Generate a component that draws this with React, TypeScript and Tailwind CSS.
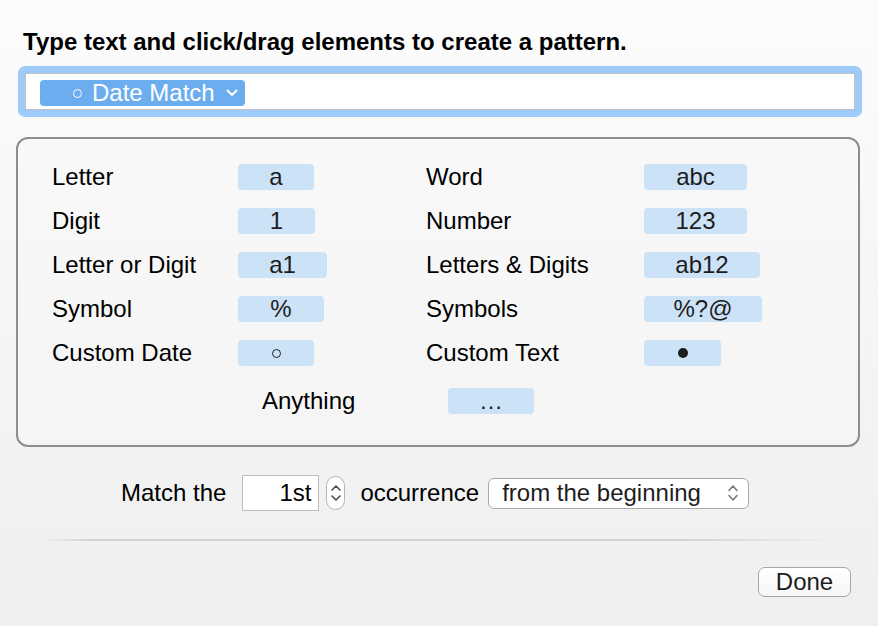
import React from "react";

type Element = {
  label: string;
  sample: React.ReactNode;
  width: string;
};

const leftColumn: Element[] = [
  { label: "Letter", sample: "a", width: "w-[76px]" },
  { label: "Digit", sample: "1", width: "w-[77px]" },
  { label: "Letter or Digit", sample: "a1", width: "w-[89px]" },
  { label: "Symbol", sample: "%", width: "w-[86px]" },
  {
    label: "Custom Date",
    sample: <span className="inline-block h-[9px] w-[9px] rounded-full border-[1.5px] border-[#222]" />,
    width: "w-[76px]",
  },
];

const rightColumn: Element[] = [
  { label: "Word", sample: "abc", width: "w-[103px]" },
  { label: "Number", sample: "123", width: "w-[103px]" },
  { label: "Letters & Digits", sample: "ab12", width: "w-[116px]" },
  { label: "Symbols", sample: "%?@", width: "w-[118px]" },
  {
    label: "Custom Text",
    sample: <span className="inline-block h-[10px] w-[10px] rounded-full bg-[#1d1d1d]" />,
    width: "w-[77px]",
  },
];

function Pill({ children, width }: { children: React.ReactNode; width: string }) {
  return (
    <div
      className={`${width} flex h-[26px] items-center justify-center rounded-[4px] bg-[#cce2f6] text-[#1d1d1d] leading-[26px]`}
    >
      {children}
    </div>
  );
}

function ChevronDown({ className }: { className?: string }) {
  return (
    <svg viewBox="0 0 12 8" className={className} fill="none">
      <path d="M1.5 1.5 6 6l4.5-4.5" stroke="currentColor" strokeWidth="2" strokeLinecap="round" strokeLinejoin="round" />
    </svg>
  );
}

function UpDown({ className }: { className?: string }) {
  return (
    <svg viewBox="0 0 12 20" className={className} fill="none">
      <path d="M2 7.5 6 3l4 4.5" stroke="currentColor" strokeWidth="1.6" strokeLinecap="round" strokeLinejoin="round" />
      <path d="M2 12.5 6 17l4-4.5" stroke="currentColor" strokeWidth="1.6" strokeLinecap="round" strokeLinejoin="round" />
    </svg>
  );
}

export default function App() {
  const rows = leftColumn.map((left, i) => ({ left, right: rightColumn[i] }));

  return (
    <div className="flex h-[626px] w-[878px] flex-col bg-gradient-to-b from-[#fcfcfc] to-[#efefef] font-['Liberation_Sans',Arial,sans-serif] text-[24px] text-black">
      <h1 className="pl-[23px] pt-[28px] text-[24px] font-bold leading-[28px]">
        Type text and click/drag elements to create a pattern.
      </h1>

      <div className="ml-[18px] mt-[10px] w-[844px] rounded-[7px] bg-[#9fcbf8] p-[7px]">
        <div className="h-[37px] border border-[#c2c2c2] bg-white pl-[14px] pt-[6px]">
          <div className="flex h-[26px] w-[205px] items-center rounded-[4px] bg-[#6cadef] pl-[33px] text-white leading-[26px]">
            <span className="mr-[10px] inline-block h-[9px] w-[9px] rounded-full border-[1.5px] border-white" />
            <span>Date Match</span>
            <ChevronDown className="ml-[11px] h-[8px] w-[12px] text-white" />
          </div>
        </div>
      </div>

      <section className="ml-[16px] mt-[20px] h-[310px] w-[844px] rounded-[12px] border-2 border-[#8d8d8d] bg-gradient-to-b from-[#f8f8f8] to-[#f5f5f5] pl-[34px] pt-[25px]">
        <div className="grid grid-cols-[186px_188px_218px_1fr] gap-y-[18px]">
          {rows.map(({ left, right }) => (
            <React.Fragment key={left.label}>
              <span className="leading-[26px]">{left.label}</span>
              <Pill width={left.width}>{left.sample}</Pill>
              <span className="leading-[26px]">{right.label}</span>
              <Pill width={right.width}>{right.sample}</Pill>
            </React.Fragment>
          ))}
        </div>
        <div className="mt-[22px] flex pl-[210px]">
          <span className="w-[186px] leading-[26px]">Anything</span>
          <Pill width="w-[86px]">…</Pill>
        </div>
      </section>

      <div className="mt-[28px] flex items-center pl-[121px]">
        <span>Match the</span>
        <div className="ml-[16px] flex h-[36px] w-[77px] items-center justify-end border border-[#bdbdbd] bg-white pr-[7px]">
          1st
        </div>
        <div className="ml-[7px] flex h-[34px] w-[19px] flex-col items-center justify-center gap-[4px] rounded-full border border-[#b5b5b5] bg-white text-[#4a4a4a]">
          <svg viewBox="0 0 10 6" className="h-[6px] w-[10px]" fill="none">
            <path d="M1 5 5 1l4 4" stroke="currentColor" strokeWidth="1.6" strokeLinecap="round" strokeLinejoin="round" />
          </svg>
          <svg viewBox="0 0 10 6" className="h-[6px] w-[10px]" fill="none">
            <path d="M1 1 5 5l4-4" stroke="currentColor" strokeWidth="1.6" strokeLinecap="round" strokeLinejoin="round" />
          </svg>
        </div>
        <span className="ml-[15px]">occurrence</span>
        <div className="ml-[9px] flex h-[31px] w-[261px] items-center justify-between rounded-[6px] border-[1.5px] border-[#a9a9a9] bg-white pl-[13px] pr-[9px] text-[#1d1d1d]">
          <span>from the beginning</span>
          <UpDown className="h-[20px] w-[12px] text-[#7a7a7a]" />
        </div>
      </div>

      <div className="ml-[40px] mt-[28px] h-[2px] w-[798px] bg-[linear-gradient(to_right,transparent,#d2d2d2_6%,#d2d2d2_80%,transparent)]" />

      <div className="mt-[26px] flex justify-end pr-[27px]">
        <button
          type="button"
          className="flex h-[30px] w-[93px] items-center justify-center rounded-[7px] border-[1.5px] border-[#a6a6a6] bg-gradient-to-b from-white to-[#f6f6f6] leading-[26px] text-[#1d1d1d]"
        >
          Done
        </button>
      </div>
    </div>
  );
}
